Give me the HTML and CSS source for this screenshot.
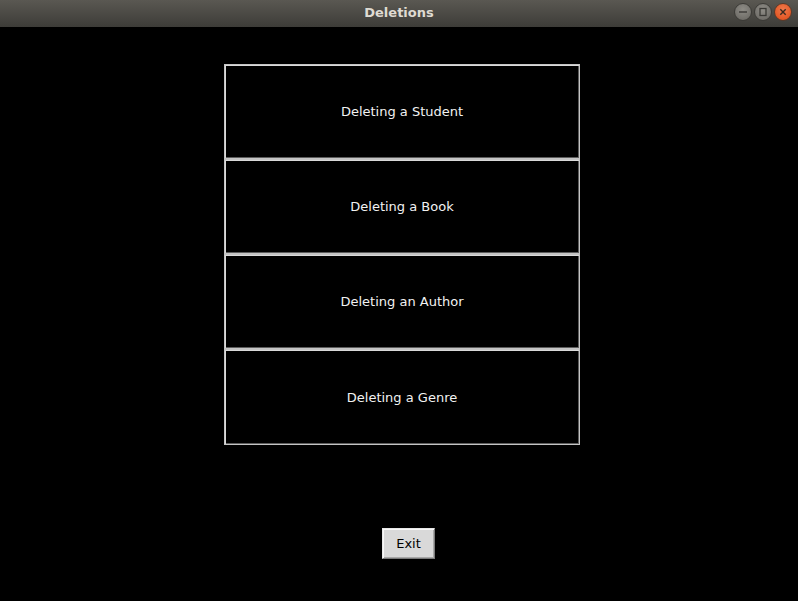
FILE: index.html
```html
<!DOCTYPE html>
<html>
<head>
<meta charset="utf-8">
<link rel="stylesheet" href="styles.css">
</head>
<body>
<div class="window">
  <div class="titlebar">
    <div class="title">Deletions</div>
    <div class="controls">
      <span class="ctl ctl-min"><svg width="18" height="18" viewBox="0 0 18 18"><line x1="5" y1="9" x2="13" y2="9" stroke="#3a3935" stroke-width="1.4"/></svg></span>
      <span class="ctl ctl-max"><svg width="18" height="18" viewBox="0 0 18 18"><rect x="6" y="5.5" width="6" height="7" fill="none" stroke="#3a3935" stroke-width="1.3"/></svg></span>
      <span class="ctl ctl-close"><svg width="18" height="18" viewBox="0 0 18 18"><path d="M6.3 6.3 L11.7 11.7 M11.7 6.3 L6.3 11.7" stroke="#3a2a20" stroke-width="1.4"/></svg></span>
    </div>
  </div>
  <div class="content">
    <div class="stack">
      <button class="tkbtn">Deleting a Student</button>
      <button class="tkbtn">Deleting a Book</button>
      <button class="tkbtn">Deleting an Author</button>
      <button class="tkbtn last">Deleting a Genre</button>
    </div>
    <button class="exit">Exit</button>
  </div>
</div>
</body>
</html>
```
FILE: styles.css
```css
html, body {
  margin: 0;
  padding: 0;
  background: #000;
}
.window {
  width: 798px;
  height: 601px;
  background: #000;
  display: flex;
  flex-direction: column;
}
.titlebar {
  height: 27px;
  box-sizing: border-box;
  padding-bottom: 3px;
  flex: none;
  background: linear-gradient(#5a5852, #3d3c38);
  position: relative;
  display: flex;
  align-items: center;
  justify-content: center;
}
.title {
  font-family: "DejaVu Sans", sans-serif;
  font-weight: bold;
  font-size: 13px;
  color: #dfdbd2;
}
.controls {
  position: absolute;
  right: 6px;
  top: 3px;
  display: flex;
  gap: 2px;
}
.ctl {
  width: 18px;
  height: 18px;
  border-radius: 50%;
  display: flex;
  align-items: center;
  justify-content: center;
  box-sizing: border-box;
}
.ctl-min, .ctl-max {
  background: radial-gradient(circle at 50% 35%, #8e8c86, #66645f);
  border: 1px solid #3c3b37;
}
.ctl-close {
  background: radial-gradient(circle at 50% 35%, #f07a4c, #de4a16);
  border: 1px solid #5a3a2a;
}
.ctl svg {
  display: block;
  margin: -1px;
}
.content {
  flex: 1;
  display: flex;
  flex-direction: column;
  align-items: flex-start;
  padding-top: 37px;
}
.stack {
  margin-left: 224px;
  width: 356px;
  display: flex;
  flex-direction: column;
}
.tkbtn {
  height: 95px;
  width: 356px;
  box-sizing: border-box;
  margin: 0;
  padding: 0;
  background: #000;
  border: 1px solid #c4c4c4;
  box-shadow: inset 1px 1px 0 #d9d9d9, inset -1px -1px 0 #5c5c5c;
  color: #f2f2f2;
  font-family: "DejaVu Sans", sans-serif;
  font-size: 13px;
  text-align: center;
  outline: none;
}
.tkbtn.last {
  height: 96px;
}
.exit {
  margin-top: 83px;
  margin-left: 382px;
  width: 53px;
  height: 31px;
  box-sizing: border-box;
  padding: 0;
  background: #d9d9d9;
  border: 1px solid #e8e8e8;
  border-right-color: #7a7a7a;
  border-bottom-color: #7a7a7a;
  box-shadow: inset 1px 1px 0 #f8f8f8, inset -1px -1px 0 #a8a8a8;
  color: #000;
  font-family: "DejaVu Sans", sans-serif;
  font-size: 13px;
}
```
